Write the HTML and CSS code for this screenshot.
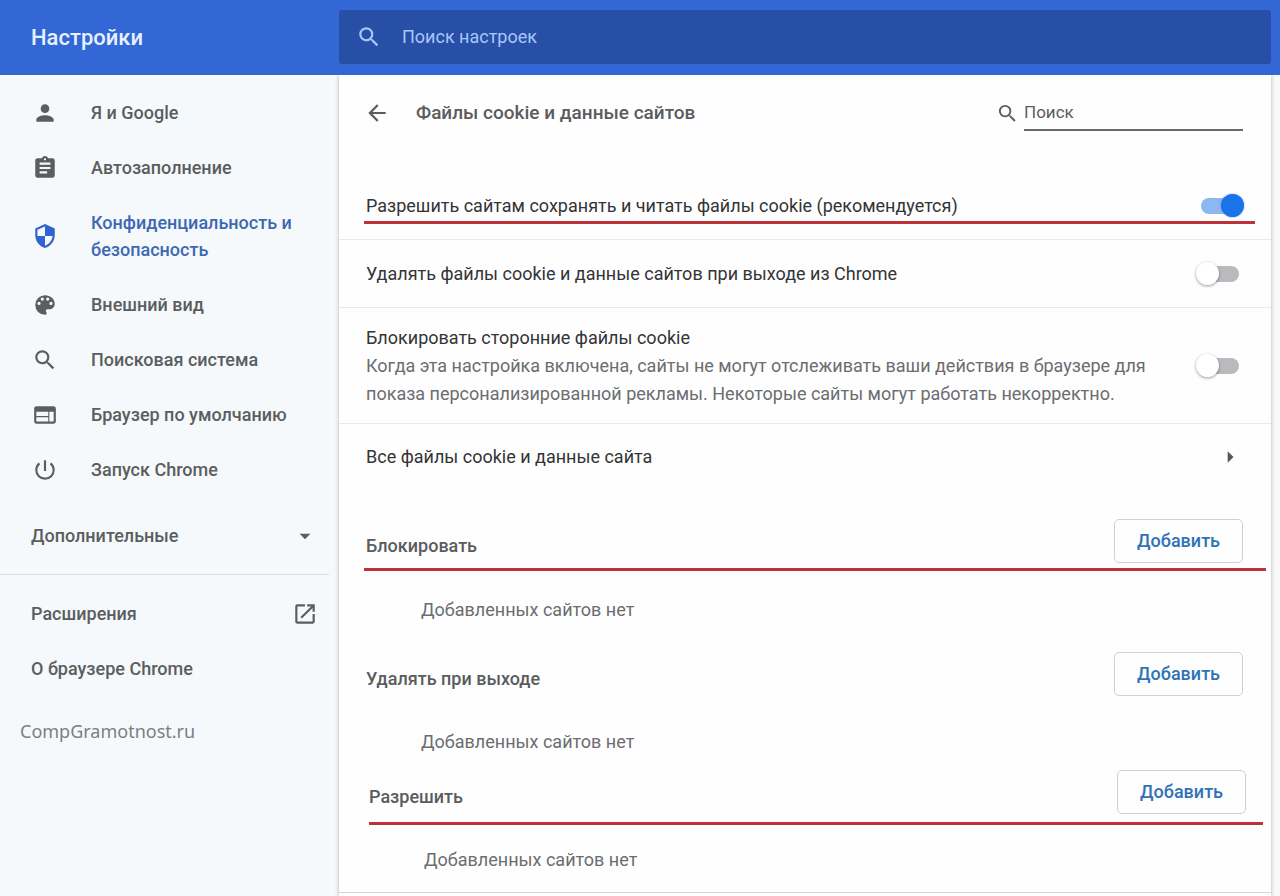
FILE: index.html
```html
<!DOCTYPE html>
<html lang="ru">
<head>
<meta charset="utf-8">
<title>Настройки</title>
<link rel="stylesheet" href="styles.css">
</head>
<body>
<header class="toolbar">
  <h1 class="toolbar-title">Настройки</h1>
  <label class="toolbar-search">
    <svg class="icon" viewBox="0 0 24 24" aria-hidden="true"><path d="M15.5 14h-.79l-.28-.27A6.47 6.47 0 0 0 16 9.5 6.5 6.5 0 1 0 9.5 16c1.61 0 3.09-.59 4.23-1.57l.27.28v.79l5 4.99L20.49 19l-4.99-5zm-6 0a4.5 4.5 0 1 1 0-9 4.5 4.5 0 0 1 0 9z"/></svg>
    <input type="text" placeholder="Поиск настроек" aria-label="Поиск настроек">
  </label>
</header>
<div class="layout">
  <nav class="sidebar">
    <a class="nav-item" href="#"><svg class="icon" viewBox="0 0 24 24"><path d="M12 12a4 4 0 1 0 0-8 4 4 0 0 0 0 8zm0 2c-2.67 0-8 1.34-8 4v2h16v-2c0-2.66-5.33-4-8-4z"/></svg>Я и Google</a>
    <a class="nav-item" href="#"><svg class="icon" viewBox="0 0 24 24"><path d="M19 3h-4.18C14.4 1.84 13.3 1 12 1s-2.4.84-2.82 2H5c-1.1 0-2 .9-2 2v14c0 1.1.9 2 2 2h14c1.1 0 2-.9 2-2V5c0-1.1-.9-2-2-2zm-7 0c.55 0 1 .45 1 1s-.45 1-1 1-1-.45-1-1 .45-1 1-1zm2 14H7v-2h7v2zm3-4H7v-2h10v2zm0-4H7V7h10v2z"/></svg>Автозаполнение</a>
    <a class="nav-item selected" href="#"><svg class="icon" viewBox="0 0 24 24"><path d="M12 1L3 5v6c0 5.55 3.84 10.74 9 12 5.16-1.26 9-6.45 9-12V5l-9-4zm0 10.99h7c-.53 4.12-3.28 7.79-7 8.94V12H5V6.3l7-3.11v8.8z"/></svg>Конфиденциальность и безопасность</a>
    <a class="nav-item" href="#"><svg class="icon" viewBox="0 0 24 24"><path d="M12 3a9 9 0 0 0 0 18c.83 0 1.5-.67 1.5-1.5 0-.39-.15-.74-.39-1.01-.23-.26-.38-.61-.38-.99 0-.83.67-1.5 1.5-1.5H16c2.76 0 5-2.24 5-5 0-4.42-4.03-8-9-8zm-5.5 9a1.5 1.5 0 1 1 0-3 1.5 1.5 0 0 1 0 3zm3-4a1.5 1.5 0 1 1 0-3 1.5 1.5 0 0 1 0 3zm5 0a1.5 1.5 0 1 1 0-3 1.5 1.5 0 0 1 0 3zm3 4a1.5 1.5 0 1 1 0-3 1.5 1.5 0 0 1 0 3z"/></svg>Внешний вид</a>
    <a class="nav-item" href="#"><svg class="icon" viewBox="0 0 24 24"><path d="M15.5 14h-.79l-.28-.27A6.47 6.47 0 0 0 16 9.5 6.5 6.5 0 1 0 9.5 16c1.61 0 3.09-.59 4.23-1.57l.27.28v.79l5 4.99L20.49 19l-4.99-5zm-6 0a4.5 4.5 0 1 1 0-9 4.5 4.5 0 0 1 0 9z"/></svg>Поисковая система</a>
    <a class="nav-item" href="#"><svg class="icon" viewBox="0 0 24 24"><path d="M20 4H4c-1.1 0-2 .9-2 2v12c0 1.1.9 2 2 2h16c1.1 0 2-.9 2-2V6c0-1.1-.9-2-2-2zm-5 14H4v-4h11v4zm0-5H4V9h11v4zm5 5h-4V9h4v9z"/></svg>Браузер по умолчанию</a>
    <a class="nav-item" href="#"><svg class="icon" viewBox="0 0 24 24"><path d="M13 3h-2v10h2V3zm4.83 2.17l-1.42 1.42A6.92 6.92 0 0 1 19 12a7 7 0 1 1-11.42-5.42L6.17 5.17A8.93 8.93 0 0 0 3 12a9 9 0 0 0 18 0c0-2.74-1.23-5.18-3.17-6.83z"/></svg>Запуск Chrome</a>
    <button class="nav-item nav-more" type="button">Дополнительные<svg class="icon" viewBox="0 0 24 24"><path d="M7 10l5 5 5-5z"/></svg></button>
    <hr class="nav-divider">
    <a class="nav-item nav-wide" href="#">Расширения<svg class="icon" viewBox="0 0 24 24"><path d="M19 19H5V5h7V3H5a2 2 0 0 0-2 2v14c0 1.1.89 2 2 2h14c1.1 0 2-.9 2-2v-7h-2v7zM14 3v2h3.59l-9.83 9.83 1.41 1.41L19 6.41V10h2V3h-7z"/></svg></a>
    <a class="nav-item nav-wide" href="#">О браузере Chrome</a>
    <p class="site-mark">CompGramotnost.ru</p>
  </nav>
  <main class="card">
    <div class="card-header">
      <button class="back" type="button" aria-label="Назад"><svg class="icon" viewBox="0 0 24 24"><path d="M20 11H7.83l5.59-5.59L12 4l-8 8 8 8 1.41-1.41L7.83 13H20v-2z"/></svg></button>
      <h2 class="card-title">Файлы cookie и данные сайтов</h2>
      <label class="card-search">
        <svg class="icon" viewBox="0 0 24 24"><path d="M15.5 14h-.79l-.28-.27A6.47 6.47 0 0 0 16 9.5 6.5 6.5 0 1 0 9.5 16c1.61 0 3.09-.59 4.23-1.57l.27.28v.79l5 4.99L20.49 19l-4.99-5zm-6 0a4.5 4.5 0 1 1 0-9 4.5 4.5 0 0 1 0 9z"/></svg>
        <input type="text" placeholder="Поиск" aria-label="Поиск">
      </label>
    </div>
    <label class="row marked">
      <span class="row-text">Разрешить сайтам сохранять и читать файлы cookie (рекомендуется)</span>
      <input class="toggle" type="checkbox" checked>
    </label>
    <label class="row">
      <span class="row-text">Удалять файлы cookie и данные сайтов при выходе из Chrome</span>
      <input class="toggle" type="checkbox">
    </label>
    <label class="row">
      <span class="row-text">Блокировать сторонние файлы cookie
        <span class="row-note">Когда эта настройка включена, сайты не могут отслеживать ваши действия в браузере для показа персонализированной рекламы. Некоторые сайты могут работать некорректно.</span>
      </span>
      <input class="toggle" type="checkbox">
    </label>
    <a class="row row-link" href="#">
      <span class="row-text">Все файлы cookie и данные сайта</span>
      <svg class="icon" viewBox="0 0 24 24"><path d="M10 7l5 5-5 5z"/></svg>
    </a>
    <section class="site-list">
      <div class="site-head marked"><h3>Блокировать</h3><button class="add" type="button">Добавить</button></div>
      <p class="site-empty">Добавленных сайтов нет</p>
    </section>
    <section class="site-list">
      <div class="site-head"><h3>Удалять при выходе</h3><button class="add" type="button">Добавить</button></div>
      <p class="site-empty">Добавленных сайтов нет</p>
    </section>
    <section class="site-list site-list-last">
      <div class="site-head marked"><h3>Разрешить</h3><button class="add" type="button">Добавить</button></div>
      <p class="site-empty">Добавленных сайтов нет</p>
    </section>
  </main>
</div>
</body>
</html>
```
FILE: styles.css
```css
* { box-sizing: border-box; }

body {
  margin: 0;
  min-height: 100vh;
  display: flex;
  flex-direction: column;
  background: #f9f9fa;
  color: #333436;
  font: 400 18px/28px Roboto, sans-serif;
}

h1, h2, h3, p { margin: 0; font-weight: 500; }
button, input { font: inherit; color: inherit; }
button { background: none; border: 0; cursor: pointer; }
a { color: inherit; text-decoration: none; }
.icon { width: 26px; height: 26px; flex: none; fill: currentColor; }

.toolbar {
  display: grid;
  grid-template-columns: 339px 1fr;
  align-items: center;
  height: 75px;
  padding-right: 9px;
  background: #3367d6;
}
.toolbar-title { padding-left: 31px; color: #e6f2ff; font-size: 22px; }
.toolbar-search {
  display: flex;
  align-items: center;
  gap: 20px;
  height: 54px;
  padding: 0 17px;
  margin-bottom: 2px;
  border-radius: 3px;
  background: #274fa6;
  color: #a9c6fb;
}
.toolbar-search input {
  flex: 1;
  min-width: 0;
  padding: 0;
  border: 0;
  outline: 0;
  background: none;
}
input::placeholder { color: inherit; opacity: 1; }

.layout {
  flex: 1;
  display: grid;
  grid-template-columns: 339px 1fr;
  padding-right: 9px;
}

.sidebar {
  padding-top: 10px;
  background: #f6f9fb;
  color: #5a5e60;
  font-weight: 500;
  line-height: 27px;
}
.nav-item {
  display: flex;
  align-items: center;
  gap: 33px;
  width: 100%;
  min-height: 55px;
  padding: 14px 32px;
}
.selected { color: #3d68b4; }
.selected .icon { color: #3064cf; }
.nav-more, .nav-wide { justify-content: space-between; padding: 0 21px 0 31px; }
.nav-more { margin-top: 11px; }
.nav-divider { height: 1px; margin: 11px 10px 11px 0; border: 0; background: #dadee1; }
.site-mark {
  padding: 21px 20px;
  color: #7b7f81;
  font: 400 18px/28px "Noto Sans", sans-serif;
}

.card {
  background: #fefefe;
  box-shadow: 0 0 4px rgba(60, 64, 67, .4);
  clip-path: inset(0 -6px);
}
.card-header {
  display: flex;
  align-items: center;
  height: 76px;
  margin-bottom: 21px;
  padding: 0 28px 0 25px;
  color: #5a5c5e;
}
.back { display: flex; padding: 0; }
.card-title { flex: 1; padding-left: 26px; font-size: 19px; }
.card-search { display: flex; align-items: center; gap: 5px; }
.card-search .icon { width: 23px; height: 23px; }
.card-search input {
  width: 219px;
  height: 36px;
  padding: 0;
  border: 0;
  border-bottom: 2px solid #68696c;
  outline: 0;
  background: none;
  font-size: 17px;
}

.row {
  position: relative;
  display: flex;
  align-items: center;
  justify-content: space-between;
  gap: 24px;
  min-height: 68px;
  padding: 16px 32px 15px 27px;
  border-bottom: 1px solid #e9e9ea;
}
.row-text { flex: 1; }
.row-note { display: block; max-width: 800px; color: #6b6d70; }
.row-link { min-height: 65px; padding-right: 27px; border: 0; }
.row-link .icon { width: 28px; height: 28px; color: #55575a; }

.toggle {
  appearance: none;
  position: relative;
  flex: none;
  width: 38px;
  height: 16px;
  margin: 0;
  border-radius: 8px;
  background: #b9babd;
}
.toggle::before {
  content: "";
  position: absolute;
  top: -4px;
  left: -5px;
  width: 23px;
  height: 23px;
  border-radius: 50%;
  background: #fff;
  box-shadow: 0 1px 3px rgba(0, 0, 0, .4);
}
.toggle:checked { background: #8cb7f1; }
.toggle:checked::before { left: 20px; background: #1a73e8; box-shadow: 0 0 2px rgba(26, 115, 232, .6); }

.marked::after {
  content: "";
  position: absolute;
  left: 25px;
  right: 16px;
  bottom: 15px;
  height: 3px;
  background: #bd3139;
}

.site-list { padding: 28px 28px 0 27px; color: #5a5c5e; }
.row-link + .site-list { padding-top: 30px; }
.site-head { position: relative; display: flex; justify-content: space-between; }
.site-head h3 { padding-top: 13px; font-size: 18px; }
.site-head.marked::after { left: -2px; right: -23px; bottom: -8px; }
.add {
  height: 44px;
  padding: 0 22px;
  border: 1px solid #cfd0d2;
  border-radius: 5px;
  color: #2f72b5;
  font-weight: 500;
}
.site-empty { padding: 32px 0 0 55px; color: #6b6d70; font-weight: 400; }
.row-link + .site-list .site-empty { padding-top: 33px; }
.site-list-last {
  padding: 14px 25px 18px 30px;
  border-bottom: 1px solid #d5d7d9;
}
.site-list-last .site-head.marked::after { left: 0; right: -17px; bottom: -11px; }
```
